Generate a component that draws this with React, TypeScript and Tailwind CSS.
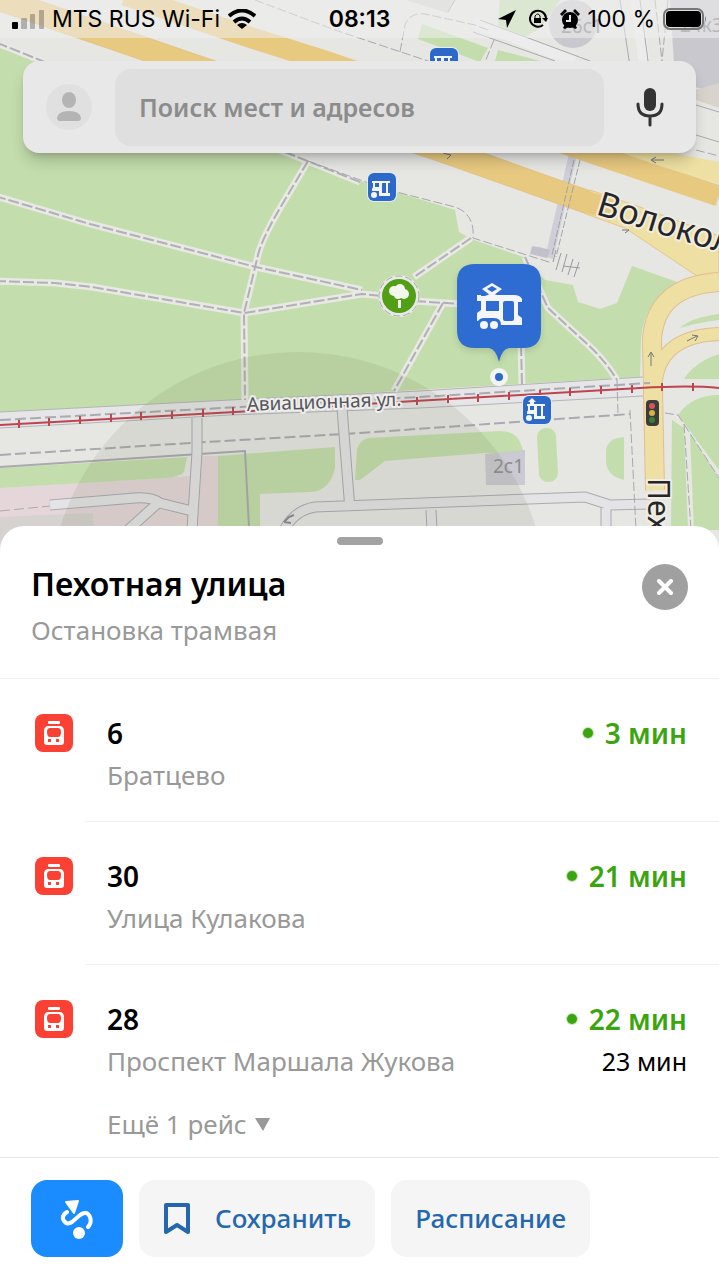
import { clsx } from 'clsx';

interface Route {
  number: string;
  destination: string;
  arrivals: string[];
  more?: string;
}

const ROUTES: Route[] = [
  { number: '6', destination: 'Братцево', arrivals: ['3 мин'] },
  { number: '30', destination: 'Улица Кулакова', arrivals: ['21 мин'] },
  { number: '28', destination: 'Проспект Маршала Жукова', arrivals: ['22 мин', '23 мин'], more: 'Ещё 1 рейс' },
];

const FOOTPATHS = [
  'M-5 196L90 224L256 267L362 290',
  'M-5 281L55 283L92 287L244 313L362 294L384 296',
  'M308 161L283 203Q262 238 258 255L244 313L245 400',
  'M360 182L285 152L80 76L0 44',
  'M471 238L414 277',
  'M415 301L460 304',
  'M443 303L394 391',
  'M521 345L522 384',
  'M525 257L548 308L585 342Q605 360 617 380',
];

const GREENS = [
  'M0 48L100 84L285 153L360 181L455 210L459 232L471 239L523 257L545 280L573 285L578 302L600 309L617 303L632 266L680 283Q643 300 641 340L640 377L240 400L0 412Z',
  'M0 468L187 457L184 472Q180 477 165 478L0 488Z',
  'M218 456L335 447L335 468Q330 491 310 492L260 494L260 530L218 530Z',
  'M357 449Q360 440 368 438L500 431Q515 431 520 442L524 453L485 453L385 461L360 480L355 480Z',
  'M606 450Q608 438 624 437L624 480Q606 476 606 460Z',
  'M719 354Q695 362 684 379L719 379Z',
  'M719 395Q692 395 678 415L719 470Z',
  'M672 420L684 428L688 530L671 530Z',
  'M690 434L719 478L719 530L694 530Z',
  'M500 0L498 26L521 40L540 28L560 0Z',
  'M422 24L488 48L480 62L418 39Z',
  'M498 50L540 61L495 61Z',
  'M680 328Q690 318 719 314L719 320Q700 322 680 328Z',
];

const LANES = [
  'M50 505L135 498Q152 497 160 503L192 511',
  'M158 503L128 530',
  'M197 418L197 452L192 530',
  'M342 408L350 510',
  'M284 530Q295 510 315 507L585 497L610 505L650 504',
  'M431 510L432 530',
  'M606 508L606 530',
];

const RAIL_TICKS = [
  [19, 424], [49, 422], [80, 420], [111, 418], [141, 416], [172, 415], [203, 413], [233, 411],
  [417, 401], [448, 399], [478, 398], [509, 396], [540, 394], [570, 392], [601, 390], [632, 389], [662, 387], [693, 387],
];

function TramSide() {
  return (
    <g fill="#f4f6fb" fillRule="evenodd">
      <path d="M16 -1L26 5L18 11H14L6 5ZM16 2L11 5L16 8L21 5Z" />
      <path
        d="M1 11H5V12H9L14 10H18L21 11H38Q44 11 46 15V18H42V31L46 34V41H25Q25 34 18 34H8Q4 34 2 37H1V29L5 26V17H1ZM10 17V27H23V17ZM29 17Q27 17 27 19V35Q27 37 29 37H36Q38 37 38 35V19Q38 17 36 17Z"
      />
      <circle cx="8" cy="41" r="4" />
      <circle cx="18" cy="41" r="4" />
    </g>
  );
}

function StopBadge({ x, y, flag }: { x: number; y: number; flag?: boolean }) {
  return (
    <g transform={`translate(${x} ${y})`}>
      <rect x="-1" y="-1" width="30" height="30" rx="7" fill="#e3ebf5" />
      <rect width="28" height="28" rx="6" fill="#2c69c9" />
      <path
        d="M4 8H22V10H20V20H22V23H11V18H4V16L5 14V10H4ZM7 10V14H11V10ZM14 10V20H18V10Z"
        fill="#f4f6fb"
        fillRule="evenodd"
      />
      <circle cx="6" cy="22" r="3" fill="#f4f6fb" />
      {flag && <path d="M9 2L13 6L11 6V9H7V6H5Z" fill="#f4f6fb" />}
    </g>
  );
}

function StopMap() {
  return (
    <svg
      className="absolute inset-0 h-full w-full"
      viewBox="0 0 719 550"
      preserveAspectRatio="xMidYMin slice"
      role="img"
      aria-label="Карта"
      fontFamily='"Noto Sans", sans-serif'
    >
      <rect width="719" height="550" fill="#e6e6e3" />
      <path d="M365 0L455 0L448 13L380 -8Z" fill="#d6d4d2" />
      <path d="M670 0H719V95L675 80Z" fill="#c9c8cf" />
      <path d="M696 90L719 83V108L696 100Z" fill="#d9d3cd" />
      <path d="M0 488L190 476L202 456H218V550H0Z" fill="#e5d6da" />
      <path d="M0 517L93 513L95 550H0Z" fill="#d6d2cf" />
      {GREENS.map((d) => (
        <path key={d} d={d} fill="#c3ddac" />
      ))}
      <rect x="538" y="428" width="19" height="54" rx="9" fill="#c3ddac" transform="rotate(-3 547 455)" />
      <circle cx="573" cy="24" r="24" fill="#c9c8cf" />

      {/* small streets around the junction */}
      <path d="M473 22L575 61M636 0L644 61" stroke="#ececec" strokeWidth="11" />
      <g fill="none" stroke="#a9a9ae" strokeWidth="1">
        <path d="M473 32L555 61M480 20L590 61M620 0L638 120M640 0L648 61M455 0L448 12" />
        <path d="M696 105L719 112M696 135L719 142" />
        <path d="M0 467L245 451L249 527" strokeWidth="2" />
      </g>
      <path d="M574 150L550 254L536 250" fill="none" stroke="#cfced6" strokeWidth="8" />
      <path d="M532 246L550 250L547 258L530 254Z" fill="#c2c0cb" />

      {/* highway carriageways */}
      <path d="M-10 -4L113 38L180 61L452 154L590 203" fill="none" stroke="#e3c386" strokeWidth="24" />
      <path d="M-10 -4L113 38L180 61L452 154L590 203" fill="none" stroke="#e8c980" strokeWidth="22" />
      <path d="M590 190L640 207L719 236V290L700 278L625 228L586 214Z" fill="#eee0a2" stroke="#e5c58f" strokeWidth="1" />
      <path d="M585 190L620 201L610 221L580 211Z" fill="#e8c980" />
      <path d="M125 -5L252 38L325 61L595 154L719 196" fill="none" stroke="#e8c980" strokeWidth="21" />
      <path d="M622 153L719 153V184L660 166Z" fill="#eee0a2" />
      <path d="M672 153L719 153V162Z" fill="#e6e6e3" />

      {/* slip roads */}
      <g fill="none">
        <path d="M655 490L652 340Q655 286 719 282" stroke="#e3bd92" strokeWidth="20" />
        <path d="M656 380Q662 336 719 334" stroke="#e3bd92" strokeWidth="14" />
        <path d="M655 490L652 340Q655 286 719 282" stroke="#eee0a2" strokeWidth="18" />
        <path d="M656 380Q662 336 719 334" stroke="#eee0a2" strokeWidth="12" />
      </g>

      {/* Aviatsionnaya street */}
      <path d="M0 412L230 400L420 391L643 377V396L420 408L0 428Z" fill="#e6e6e8" />
      <path
        d="M0 412L230 400L420 391L643 377M0 428L230 415L420 408L643 396"
        fill="none"
        stroke="#b4b4b8"
        strokeWidth="1"
      />
      <path
        d="M0 420L240 407L420 397L650 383M0 455L190 443L360 433L630 414"
        fill="none"
        stroke="#aaaab0"
        strokeWidth="2"
        strokeDasharray="11 4"
      />

      {/* yard driveways */}
      <g fill="none">
        {LANES.map((d) => (
          <path key={d} d={d} stroke="#aaaab0" strokeWidth="11" />
        ))}
        {LANES.map((d) => (
          <path key={d} d={d} stroke="#e4e4e6" strokeWidth="9" />
        ))}
      </g>
      <path d="M0 511L50 506" stroke="#aaaab0" strokeWidth="1" strokeDasharray="10 4" />
      <path d="M284 522L289 517L294 515M284 522L291 523" fill="none" stroke="#8a8a8e" strokeWidth="2" />

      <g fill="none">
        {FOOTPATHS.map((d) => (
          <path key={d} d={d} stroke="#e8e8e4" strokeWidth="7" />
        ))}
        {FOOTPATHS.map((d) => (
          <path key={d} d={d} stroke="#b1b0b6" strokeWidth="2" strokeDasharray="11 3" />
        ))}
        <path
          d="M308 161L385 189L455 207Q475 214 473 238L552 263M255 0L335 30L440 65M400 52L405 25Q410 12 425 14L475 25L488 30M494 40L485 62M630 410L636 530M617 380L618 414M665 413L678 415L719 478M684 424L691 530M696 150L719 156M655 0L662 61M668 0L662 61"
          stroke="#a9a8af"
          strokeWidth="1"
          strokeDasharray="9 3"
        />
        <path d="M574 160L552 255M580 160L556 257" stroke="#a3a2aa" strokeWidth="1" strokeDasharray="7 2" />
        <path
          d="M556 250L553 262M561 253L556 270M567 254L562 272M573 259L568 275M579 262L574 277M563 266L580 268"
          stroke="#9a9aa2"
          strokeWidth="1"
        />
      </g>

      {/* tram line */}
      <path d="M0 425L235 412L415 401L640 388Q690 385 719 388" fill="none" stroke="#bd4550" strokeWidth="2" />
      {RAIL_TICKS.map(([x, y]) => (
        <path key={x} d={`M${x} ${y - 4}V${y + 4}`} stroke="#bd4550" strokeWidth="2" />
      ))}

      <path d="M485 454L525 450V485H486Z" fill="#cbc9d1" />
      <circle cx="298" cy="601" r="249" fill="#55603c" opacity="0.1" />

      {/* direction arrows */}
      <path
        d="M651 366V353M648 357L651 352L654 357M664 160H652M656 157L651 160L656 163M687 341L697 336M692 335L698 336L695 341M443 153L451 155L447 159M622 230L629 230L625 233"
        fill="none"
        stroke="#77777a"
        strokeWidth="1"
      />

      <g fill="#55555a" stroke="#eeeeec" strokeWidth="4" paintOrder="stroke" strokeLinejoin="round">
        <text x="247" y="411" fontSize="19" transform="rotate(-2 247 411)">Авиационная ул.</text>
      </g>
      <text x="493" y="473" fontSize="19" fill="#8b8b91">2с1</text>
      <g fill="#262628" stroke="#f0ede2" strokeWidth="4" paintOrder="stroke" strokeLinejoin="round">
        <text x="595" y="214" fontSize="34" transform="rotate(17 595 214)">Волокол</text>
        <text x="648" y="478" fontSize="30" transform="rotate(90 648 478)">Пех</text>
      </g>
      <text x="561" y="33" fontSize="19" fill="#77777c">26с1</text>
      <text x="680" y="32" fontSize="19" fill="#77777c">24к3</text>

      {/* traffic light */}
      <rect x="646" y="400" width="13" height="26" rx="4" fill="#3c3c3e" />
      <circle cx="652" cy="406" r="3" fill="#d3545b" />
      <circle cx="652" cy="413" r="3" fill="#d9b440" />
      <circle cx="652" cy="420" r="3" fill="#38812f" />

      {/* park pin */}
      <circle cx="399" cy="296" r="21" fill="#e8e8e4" />
      <circle cx="399" cy="296" r="20" fill="none" stroke="#a9a8af" strokeDasharray="7 3" />
      <circle cx="399" cy="296" r="17" fill="#509f16" />
      <g fill="#f3f7ee">
        <circle cx="394" cy="291" r="5" />
        <circle cx="400" cy="289" r="5" />
        <circle cx="404" cy="294" r="5" />
        <circle cx="398" cy="295" r="4" />
        <rect x="398" y="300" width="3" height="8" />
      </g>

      <StopBadge x={430} y={48} />
      <StopBadge x={368} y={173} />
      <StopBadge x={523} y={396} flag />

      <circle cx="499" cy="377" r="9" fill="#f2f4f7" />
      <circle cx="499" cy="377" r="4" fill="#2c69c9" />
      <path
        className="drop-shadow-md"
        d="M475 264H523Q541 264 541 282V330Q541 348 523 348H509Q502 349 499 362Q496 349 489 348H475Q457 348 457 330V282Q457 264 475 264Z"
        fill="#2f6cd2"
      />
      <g transform="translate(476 284)">
        <TramSide />
      </g>
    </svg>
  );
}

function StatusBar() {
  return (
    <div className="relative grid h-[38px] grid-cols-[1fr_auto_1fr] items-center bg-[#eeeeee]/55 px-3 font-['Inter',sans-serif] text-[23px] text-black">
      <div className="flex items-center gap-2">
        <svg className="h-5 w-8" viewBox="0 0 32 20" aria-hidden="true">
          <rect x="0" y="13" width="6" height="7" rx="1" />
          <rect x="9" y="9" width="6" height="11" rx="1" opacity="0.25" />
          <rect x="18" y="5" width="5" height="15" rx="1" opacity="0.25" />
          <rect x="27" y="1" width="5" height="19" rx="1" opacity="0.25" />
        </svg>
        <span>MTS RUS Wi-Fi</span>
        <svg className="h-5 w-7" viewBox="0 0 28 20" fill="none" stroke="black" strokeWidth="4" aria-hidden="true">
          <path d="M1 7Q14 -4 27 7" />
          <path d="M6 13Q14 6 22 13" />
          <path d="M14 20L9 16Q14 12 19 16Z" fill="black" stroke="none" />
        </svg>
      </div>
      <span className="font-semibold">08:13</span>
      <div className="flex items-center justify-end gap-2">
        <svg className="h-5 w-[18px]" viewBox="0 0 18 20" aria-hidden="true">
          <path d="M18 1L0 10L8 11L9 19Z" />
        </svg>
        <svg className="ml-1 h-5 w-5" viewBox="0 0 20 20" fill="none" stroke="black" strokeWidth="2" aria-hidden="true">
          <path d="M15 16A8 8 0 1 1 18 9" />
          <path d="M14 9H20L18 13Z" fill="black" stroke="none" />
          <rect x="6" y="9" width="7" height="5" fill="black" stroke="none" />
          <path d="M7 10V7Q10 3 12 7V10" strokeWidth="1" />
        </svg>
        <svg className="ml-1 h-5 w-5" viewBox="0 0 20 20" aria-hidden="true">
          <circle cx="10" cy="11" r="8" />
          <path d="M0 5L5 0L7 2L2 7ZM20 5L15 0L13 2L18 7ZM3 19L5 15L8 18L5 20ZM17 19L15 15L12 18L15 20Z" />
          <path d="M10 6V12H6" fill="none" stroke="#e6e6e6" strokeWidth="2" />
        </svg>
        <span>100 %</span>
        <svg className="h-[22px] w-11" viewBox="0 0 44 22" aria-hidden="true">
          <rect x="1" y="1" width="39" height="20" rx="6" fill="none" stroke="#77777a" strokeWidth="2" />
          <rect x="3" y="3" width="35" height="16" rx="4" />
          <path d="M42 8Q44 11 42 14Z" fill="#77777a" />
        </svg>
      </div>
    </div>
  );
}

function SearchBar() {
  return (
    <div className="relative mx-[23px] mt-[23px] flex h-[92px] items-center rounded-2xl bg-[#e8e8e8] p-2 shadow-lg shadow-black/20">
      <button aria-label="Профиль" className="mx-[15px] flex size-[46px] items-center justify-center rounded-full bg-[#e0e0e0]">
        <svg className="size-8" viewBox="0 0 32 32" fill="#b4b4b4" aria-hidden="true">
          <ellipse cx="16" cy="9" rx="7" ry="8" />
          <path d="M4 27Q5 20 16 20Q27 20 28 27Q28 30 25 30H7Q4 30 4 27Z" />
        </svg>
      </button>
      <input
        type="text"
        aria-label="Поиск мест и адресов"
        placeholder="Поиск мест и адресов"
        className="ml-2 h-[77px] min-w-0 flex-1 rounded-2xl bg-[#dfdfdf] px-6 text-[25px] font-semibold placeholder:text-[#8c8c8c] focus:outline-none"
      />
      <button aria-label="Голосовой поиск" className="mr-5 ml-7 flex h-11 w-9 items-center justify-center">
        <svg className="h-10 w-7" viewBox="0 0 28 40" fill="none" stroke="#333333" strokeWidth="3" strokeLinecap="round" aria-hidden="true">
          <rect x="8" y="1" width="12" height="23" rx="6" fill="#333333" stroke="none" />
          <path d="M2 17Q2 29 14 29Q26 29 26 17M14 30V38" />
        </svg>
      </button>
    </div>
  );
}

function TramIcon() {
  return (
    <svg className="ml-[35px] size-[38px] shrink-0" viewBox="0 0 38 38" role="img" aria-label="Трамвай">
      <rect width="38" height="38" rx="8" fill="#fb4134" />
      <rect x="13" y="7" width="12" height="3" rx="1" fill="#ffffff" />
      <path
        d="M13 12H25Q28 12 29 16V28Q29 31 26 31H12Q9 31 9 28V16Q10 12 13 12ZM15 14Q12 14 12 18Q12 23 15 23H23Q26 23 26 18Q26 14 23 14ZM13 25V28H16V25ZM21 25V28H24V25Z"
        fill="#ffffff"
        fillRule="evenodd"
      />
    </svg>
  );
}

function RouteRow({ route, last }: { route: Route; last: boolean }) {
  return (
    <li className="flex pt-[35px]">
      <TramIcon />
      <div className={clsx('ml-3 flex-1 pr-8 pl-[22px]', last ? 'pb-[13px]' : 'border-b border-[#f0f0f0] pb-[23px]')}>
        <div className="flex justify-between">
          <div>
            <div className="text-[28px] leading-[38px] font-semibold">{route.number}</div>
            <div className="text-[26px] leading-[46px] text-[#999999]">{route.destination}</div>
          </div>
          <div className="text-right">
            <div className="flex items-center justify-end gap-3 text-[28px] leading-[38px] font-semibold text-[#3ba50f]">
              <span className="size-[10px] rounded-full bg-[#3ba50f] ring-1 ring-[#c5e6b8]" />
              {route.arrivals[0]}
            </div>
            {route.arrivals[1] && <div className="text-[25px] leading-[46px]">{route.arrivals[1]}</div>}
          </div>
        </div>
        {route.more && (
          <button className="mt-5 flex h-10 items-center gap-2 text-[26px] text-[#999999]">
            {route.more}
            <svg className="h-[13px] w-[15px]" viewBox="0 0 15 13" fill="#999999" aria-hidden="true">
              <path d="M0 0H15L8 13Z" />
            </svg>
          </button>
        )}
      </div>
    </li>
  );
}

export default function App() {
  return (
    <main className="flex min-h-screen flex-col bg-white font-['Noto_Sans',sans-serif] text-black">
      <section className="relative flex-1 overflow-hidden">
        <StopMap />
        <StatusBar />
        <SearchBar />
      </section>

      <section className="relative -mt-6 rounded-t-3xl bg-white pt-[11px]">
        <div className="mx-auto h-2 w-[46px] rounded-full bg-[#a3a3a3]" />
        <header className="flex items-start justify-between border-b border-[#f0f0f0] px-[31px] pt-[19px] pb-[22px]">
          <div>
            <h1 className="text-[32px] leading-10 font-semibold">Пехотная улица</h1>
            <p className="text-[26px] leading-[52px] text-[#999999]">Остановка трамвая</p>
          </div>
          <button aria-label="Закрыть" className="flex size-[46px] items-center justify-center rounded-full bg-[#a0a0a0]">
            <svg className="size-4" viewBox="0 0 16 16" stroke="#ffffff" strokeWidth="4" strokeLinecap="round" aria-hidden="true">
              <path d="M2 2L14 14M14 2L2 14" />
            </svg>
          </button>
        </header>

        <ul>
          {ROUTES.map((route, i) => (
            <RouteRow key={route.number} route={route} last={i === ROUTES.length - 1} />
          ))}
        </ul>

        <footer className="flex gap-4 border-t border-[#e6e6e6] px-[31px] pt-[22px] pb-[23px] text-[26px] font-medium text-[#2467ae]">
          <button aria-label="Маршрут" className="flex h-[77px] w-[92px] items-center justify-center rounded-2xl bg-[#1a8cff]">
            <svg className="h-10 w-[34px]" viewBox="0 0 34 40" fill="none" aria-hidden="true">
              <path d="M7 13Q2 16 3 20Q6 27 12 23L20 16Q27 11 30 18Q32 24 28 28" stroke="#ffffff" strokeWidth="4" strokeLinecap="round" />
              <path d="M6 3L18 2L14 14Z" fill="#ffffff" stroke="#ffffff" strokeWidth="2" strokeLinejoin="round" />
              <circle cx="19" cy="34" r="6" fill="#ffffff" />
            </svg>
          </button>
          <button className="flex h-[77px] items-center gap-6 rounded-2xl bg-[#f5f5f5] px-6">
            <svg className="h-[33px] w-7" viewBox="0 0 28 33" fill="none" stroke="#2467ae" strokeWidth="4" strokeLinejoin="round" aria-hidden="true">
              <path d="M3 3H25V30L14 23L3 30Z" />
            </svg>
            Сохранить
          </button>
          <button className="h-[77px] rounded-2xl bg-[#f5f5f5] px-6">Расписание</button>
        </footer>
      </section>
    </main>
  );
}
